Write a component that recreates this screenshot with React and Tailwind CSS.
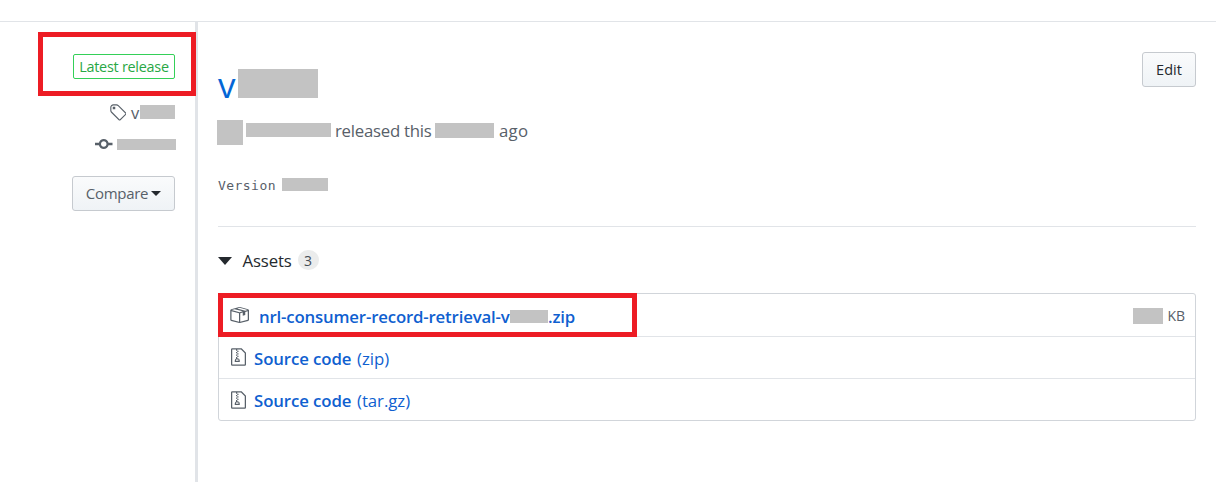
const PATHS = {
  tag: "M7.73 1.73C7.26 1.26 6.62 1 5.96 1H3.5C2.13 1 1 2.13 1 3.5v2.47c0 .66.27 1.3.73 1.77l6.06 6.06c.39.39 1.02.39 1.41 0l4.59-4.59a.996.996 0 0 0 0-1.41L7.73 1.73zM2.38 7.09c-.31-.3-.47-.7-.47-1.13V3.5c0-.88.72-1.59 1.59-1.59h2.47c.42 0 .83.16 1.13.47l6.14 6.13-4.73 4.73-6.13-6.15zM3.01 3h2v2H3V3h.01z",
  commit: "M10.86 7c-.45-1.72-2-3-3.86-3-1.86 0-3.41 1.28-3.86 3H0v2h3.14c.45 1.72 2 3 3.86 3 1.86 0 3.41-1.28 3.86-3H14V7h-3.14zM7 10.2c-1.22 0-2.2-.98-2.2-2.2 0-1.22.98-2.2 2.2-2.2 1.22 0 2.2.98 2.2 2.2 0 1.22-.98 2.2-2.2 2.2z",
  box: "M1 4.27v7.47c0 .45.3.84.75.97l6.5 1.73c.16.05.34.05.5 0l6.5-1.73c.45-.13.75-.52.75-.97V4.27c0-.45-.3-.84-.75-.97l-6.5-1.74a1.4 1.4 0 0 0-.5 0L1.75 3.3c-.45.13-.75.52-.75.97zm7 9.09l-6-1.59V5l6 1.61v6.75zM2 4l2.5-.67L11 5.06l-2.5.67L2 4zm13 7.77l-6 1.59V6.61l2-.55V8.5l2-.53V5.53L15 5v6.77zm-2-7.24L6.5 2.8l2-.53L15 4l-2 .53z",
  zip: "M8.5 1H1a1 1 0 0 0-1 1v12a1 1 0 0 0 1 1h10a1 1 0 0 0 1-1V4.5L8.5 1zM11 14H1V2h3v1h1V2h3l3 3v9zM5 4V3h1v1H5zM4 4h1v1H4V4zm1 2V5h1v1H5zM4 6h1v1H4V6zm1 2V7h1v1H5zM4 9.28A2 2 0 0 0 3 11v1h4v-1a2 2 0 0 0-2-2V8H4v1.28zM6 10v1H4v-1h2z",
};

function Icon({ name, width, className = "" }) {
  return (
    <svg
      width={width * 1.25}
      height="20"
      viewBox={`0 0 ${width} 16`}
      fill="currentColor"
      fillRule="evenodd"
      className={`shrink-0 ${className}`}
    >
      <path d={PATHS[name]} />
    </svg>
  );
}

function Redacted({ className }) {
  return <span className={`block shrink-0 bg-[#c3c3c3] ${className}`} />;
}

function SourceRow({ ext, iconClass }) {
  return (
    <div className="flex h-[42px] items-center border-t border-[#e1e4e8] pl-3">
      <Icon name="zip" width={12} className={iconClass} />
      <a className="ml-[8px] flex gap-[5px] pt-[3px] text-[16.8px] tracking-[-0.1px] text-[#0f5fd0]">
        <span className="w-[98px] font-semibold">Source code</span>
        <span className="tracking-[-0.05px]">({ext})</span>
      </a>
    </div>
  );
}

export default function App() {
  return (
    <div className="flex h-[482px] w-[1231px] flex-col overflow-hidden bg-white font-['Open_Sans','Noto_Sans',sans-serif] whitespace-nowrap text-[#586069]">
      <div className="h-[22px] w-[1216px] shrink-0 border-b border-[#e1e4e8]" />
      <div className="flex flex-1">
        <aside className="relative flex w-[198px] shrink-0 flex-col items-end border-r-[3px] border-[#e1e4e8] pt-8">
          <div className="absolute top-[10px] left-[38px] h-[64px] w-[158px] border-[5px] border-[#ed1c24]" />
          <span className="mr-5 flex h-[25px] w-[102px] items-center justify-center rounded-[2px] border border-[#34d058] text-[14.4px] tracking-[-0.25px] text-[#28a745]">
            Latest release
          </span>
          <div className="mt-[23px] mr-5 flex h-5 items-center">
            <Icon name="tag" width={14} className="mt-px" />
            <span className="ml-[5px] w-[9px] pt-px text-[16.5px] leading-5">v</span>
            <Redacted className="h-[14px] w-[35px]" />
          </div>
          <div className="mt-3 mr-[19px] flex h-5 items-center">
            <Icon name="commit" width={14} />
            <Redacted className="ml-[4.5px] h-[11px] w-[59px]" />
          </div>
          <button className="mt-[22px] mr-5 flex h-[35px] w-[103px] items-center justify-center rounded-[3px] border border-[#c6cacf] bg-linear-to-b from-[#fafbfc] to-[#eff3f6] text-[15px] tracking-[-0.3px]">
            Compare
            <span className="ml-[3px] h-0 w-0 border-x-5 border-t-5 border-x-transparent border-t-[#24292e]" />
          </button>
        </aside>

        <main className="ml-5 flex w-[978px] flex-col">
          <header className="mt-[30px] flex justify-between">
            <h1 className="mt-[17px] flex h-[29px] text-[#0366d6]">
              <span className="w-5 text-[35px] leading-[32px]">v</span>
              <Redacted className="h-[29px] w-20" />
            </h1>
            <button className="flex h-[35px] w-[54px] items-center justify-center rounded-[3px] border border-[#c6cacf] bg-linear-to-b from-[#fafbfc] to-[#eff3f6] text-[14.5px] font-medium text-[#24292e]">
              Edit
            </button>
          </header>
          <div className="mt-[22px] -ml-px flex h-[25px] items-start text-[16.8px] leading-[22px] tracking-[-0.25px]">
            <Redacted className="h-[25px] w-[26px]" />
            <Redacted className="mt-[3px] ml-[3px] h-[14px] w-[85px]" />
            <span className="ml-1 w-[100px]">released this</span>
            <Redacted className="mt-[3px] h-[15px] w-[59px]" />
            <span className="ml-[5px] tracking-[0.3px]">ago</span>
          </div>
          <div className="mt-[30px] flex h-5 items-center font-['DejaVu_Sans_Mono',monospace] text-[13px]">
            <span className="w-16 pt-px tracking-[0.45px]">Version</span>
            <Redacted className="-mt-px h-[13px] w-[46px]" />
          </div>
          <section className="mt-[31px] border-t border-[#e1e4e8]">
            <div className="flex h-[66px] items-center pt-px text-[#24292e]">
              <span className="h-0 w-0 border-x-[7.5px] border-t-[8px] border-x-transparent border-t-[#24292e]" />
              <h2 className="ml-[10.5px] w-[55px] pt-px text-[16.8px] font-medium tracking-[-0.15px]">Assets</h2>
              <span className="-mt-px flex h-5 w-[21px] items-center justify-center rounded-full bg-[#ebecec] text-[14px] text-[#444d56]">
                3
              </span>
            </div>
            <div className="relative h-[128px] rounded-[3px] border border-[#d1d5da]">
              <div className="absolute -top-px -left-px h-[44px] w-[419px] border-[5px] border-[#ed1c24]" />
              <div className="flex h-[42px] items-center pr-[10px] pl-[10px]">
                <Icon name="box" width={16} className="-mt-px" />
                <a className="ml-[10px] flex items-center pt-[3px] text-[16.8px] font-semibold tracking-[-0.17px] text-[#0f5fd0]">
                  <span className="w-[251px]">nrl-consumer-record-retrieval-v</span>
                  <Redacted className="h-[13px] w-[38px]" />
                  <span>.zip</span>
                </a>
                <div className="ml-auto flex items-center gap-1 pt-px text-[14px]">
                  <Redacted className="h-4 w-[30px]" />
                  <span>KB</span>
                </div>
              </div>
              <SourceRow ext="zip" iconClass="mb-[2px]" />
              <SourceRow ext="tar.gz" iconClass="" />
            </div>
          </section>
        </main>
      </div>
    </div>
  );
}
